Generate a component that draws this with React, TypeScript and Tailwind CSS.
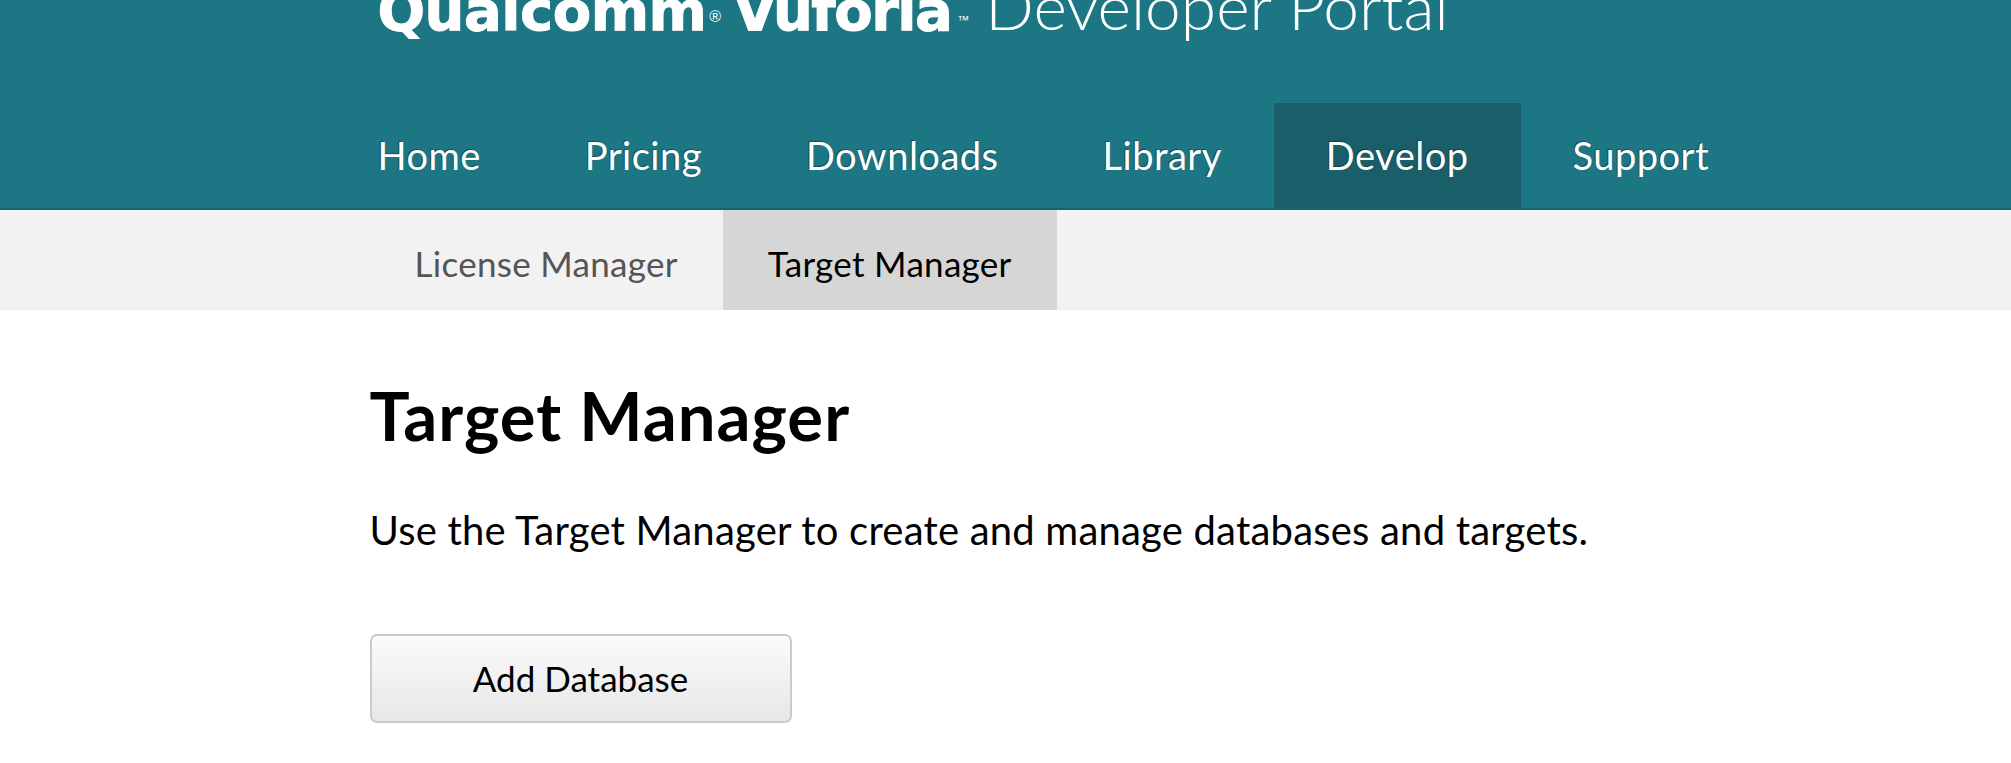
const NAV = ['Home', 'Pricing', 'Downloads', 'Library', 'Develop', 'Support'];
const TABS = ['License Manager', 'Target Manager'];

function Header() {
  return (
    <header className="border-b-2 border-[#18626e] bg-[#1d7684]">
      <div className="mx-auto w-[1272px]">
        <div className="h-[103px] overflow-hidden">
          <div className="mt-[-26px] flex items-baseline whitespace-nowrap pl-[8px] leading-none text-white">
            <span className="font-['DejaVu_Sans',sans-serif] text-[56px] font-bold tracking-[-0.5px] [-webkit-text-stroke:1px_white]">
              Qualcomm
            </span>
            <sup className="ml-[3px] font-['Liberation_Sans',sans-serif] text-[16px]">®</sup>
            <span className="ml-[12px] font-['DejaVu_Sans',sans-serif] text-[56px] font-bold tracking-[-1.5px] [-webkit-text-stroke:1px_white]">
              Vuforia
            </span>
            <sup className="ml-[6px] font-['Liberation_Sans',sans-serif] text-[12px]">™</sup>
            <span className="ml-[16px] font-['Lato',sans-serif] text-[64px] font-light">Developer Portal</span>
          </div>
        </div>
        <nav className="-ml-[44px] flex">
          {NAV.map((item) => (
            <a
              key={item}
              className={`flex h-[105px] items-center px-[52px] font-['Lato',sans-serif] text-[38px] tracking-[0.5px] text-white [text-shadow:-1px_-1px_0_rgba(0,0,0,0.35)] ${
                item === 'Develop' ? 'bg-[#1a5e6a]' : ''
              }`}
            >
              {item}
            </a>
          ))}
        </nav>
      </div>
    </header>
  );
}

function SubNav() {
  return (
    <div className="bg-[#f2f2f2]">
      <div className="mx-auto flex w-[1272px]">
        {TABS.map((tab) => (
          <a
            key={tab}
            className={`flex h-[100px] items-center px-[45px] pt-[6px] font-['Lato',sans-serif] text-[35px] tracking-[0.3px] ${
              tab === 'Target Manager' ? 'bg-[#d6d6d6] text-black' : 'text-[#555]'
            }`}
          >
            {tab}
          </a>
        ))}
      </div>
    </div>
  );
}

export default function App() {
  return (
    <div className="min-h-[763px] bg-white font-['Lato',sans-serif] text-black">
      <Header />
      <SubNav />
      <main className="mx-auto w-[1272px] pt-[64px]">
        <h1 className="text-[67px] leading-[82px] font-bold tracking-[1px]">Target Manager</h1>
        <p className="mt-[48px] text-[40px] leading-[52px] tracking-[0.2px]">
          Use the Target Manager to create and manage databases and targets.
        </p>
        <button className="mt-[78px] flex h-[89px] w-[422px] items-center justify-center rounded-[7px] border-2 border-[#cbcbcb] bg-gradient-to-b from-[#fbfbfb] to-[#e7e7e7] text-[35px] text-black">
          Add Database
        </button>
      </main>
    </div>
  );
}
